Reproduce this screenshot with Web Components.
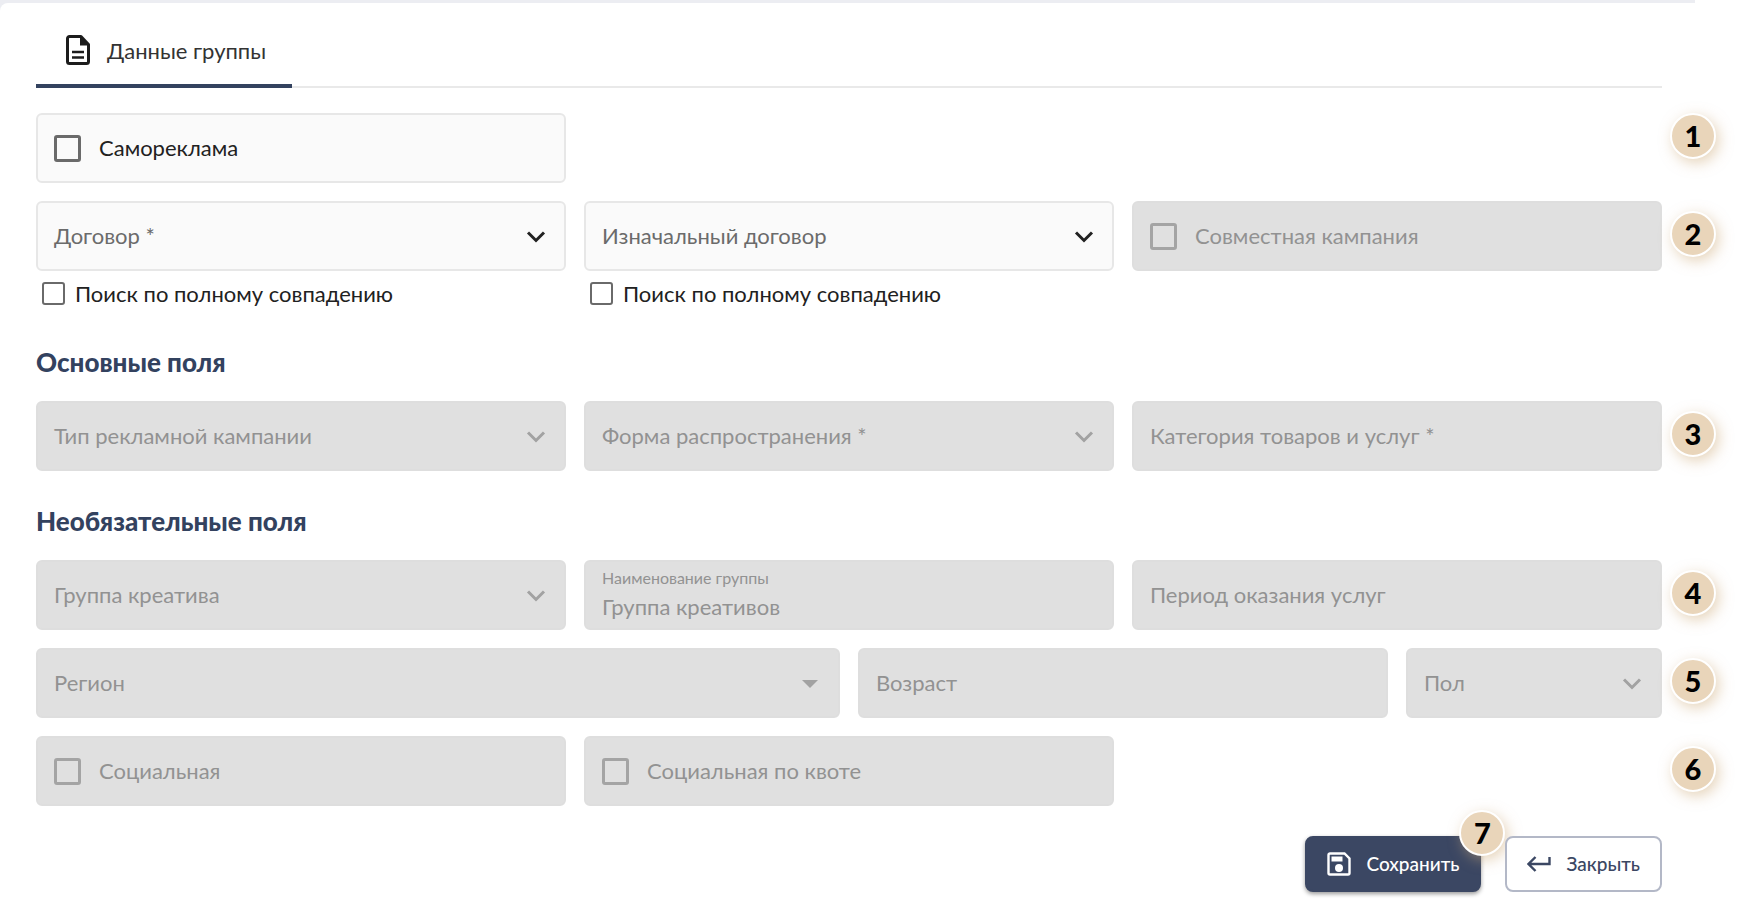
<!DOCTYPE html>
<html lang="ru">
<head>
<meta charset="utf-8">
<meta name="viewport" content="width=device-width, initial-scale=1">
<title>Данные группы</title>
<style>
  body {
    margin: 0;
    background: #fff;
    color: #212121;
    font-family: Lato, "Noto Sans", sans-serif;
    font-size: 22px;
    line-height: 26px;
  }
  .w2 { grid-column: span 2; }
  .w4 { grid-column: span 4; }
  .w6 { grid-column: span 6; }
</style>
</head>
<body>

<form-panel>
  <panel-tab slot="tabs">Данные группы</panel-tab>

  <form-row>
    <check-box class="w4" boxed label="Самореклама"></check-box>
    <step-pin slot="pin" top>1</step-pin>
  </form-row>

  <form-row>
    <select-field class="w4" label="Договор *"></select-field>
    <select-field class="w4" label="Изначальный договор"></select-field>
    <check-box class="w4" boxed disabled label="Совместная кампания"></check-box>
    <step-pin slot="pin">2</step-pin>
  </form-row>

  <form-row hints>
    <check-box class="w4" label="Поиск по полному совпадению"></check-box>
    <check-box class="w4" label="Поиск по полному совпадению"></check-box>
  </form-row>

  <section-title>Основные поля</section-title>

  <form-row>
    <select-field class="w4" disabled label="Тип рекламной кампании"></select-field>
    <select-field class="w4" disabled label="Форма распространения *"></select-field>
    <text-field class="w4" disabled label="Категория товаров и услуг *"></text-field>
    <step-pin slot="pin">3</step-pin>
  </form-row>

  <section-title>Необязательные поля</section-title>

  <form-row>
    <select-field class="w4" disabled label="Группа креатива"></select-field>
    <text-field class="w4" disabled label="Наименование группы" value="Группа креативов"></text-field>
    <text-field class="w4" disabled label="Период оказания услуг"></text-field>
    <step-pin slot="pin">4</step-pin>
  </form-row>

  <form-row>
    <select-field class="w6" disabled arrow="solid" label="Регион"></select-field>
    <text-field class="w4" disabled label="Возраст"></text-field>
    <select-field class="w2" disabled label="Пол"></select-field>
    <step-pin slot="pin">5</step-pin>
  </form-row>

  <form-row>
    <check-box class="w4" boxed disabled label="Социальная"></check-box>
    <check-box class="w4" boxed disabled label="Социальная по квоте"></check-box>
    <step-pin slot="pin">6</step-pin>
  </form-row>

  <action-button slot="actions" primary icon="save">
    Сохранить
    <step-pin slot="pin" corner>7</step-pin>
  </action-button>
  <action-button slot="actions" icon="back">Закрыть</action-button>
</form-panel>

<script>
// Общие стили рамки поля
const boxStyle = `
  .box {
    box-sizing: border-box;
    min-height: 70px;
    border: 2px solid #e7e7e7;
    border-radius: 6px;
    background: #fafafa;
  }
  :host([disabled]) .box {
    border-color: #dedede;
    background: #e0e0e0;
    color: #929292;
  }
`;

class FormPanel extends HTMLElement {
  constructor() {
    super();
    this.attachShadow({mode: 'open'});
    this.shadowRoot.innerHTML = `
      <style>
        :host {
          display: block;
          margin-right: 54px;
          padding-top: 3px;
          background: #ecedf2;
        }
        main {
          padding: 15px 33px 32px 36px;
          border-radius: 8px 0 0 0;
          background: #fff;
        }
        nav {
          display: flex;
          margin-bottom: 25px;
          box-shadow: inset 0 -2px #e9e9e9;
        }
        form {
          display: flex;
          flex-direction: column;
        }
        footer {
          display: flex;
          justify-content: flex-end;
          gap: 24px;
          margin-top: 12px;
        }
      </style>
      <main>
        <nav><slot name="tabs"></slot></nav>
        <form>
          <slot></slot>
          <footer><slot name="actions"></slot></footer>
        </form>
      </main>
    `;
  }
}

class PanelTab extends HTMLElement {
  constructor() {
    super();
    this.attachShadow({mode: 'open'});
    this.shadowRoot.innerHTML = `
      <style>
        :host { display: block; }
        button {
          display: flex;
          align-items: center;
          gap: 17px;
          height: 70px;
          padding: 0 26px 0 30px;
          border: 0;
          border-bottom: 4px solid #33425f;
          background: none;
          color: #333;
          font: inherit;
        }
        svg { flex: none; }
      </style>
      <button type="button">
        <svg width="24" height="32" viewBox="0 0 24 32" fill="none" stroke="#1c1c1c" aria-hidden="true">
          <path d="M3.5 1.5h11.500l7.500 8v17a2 2 0 0 1-2 2h-17a2 2 0 0 1-2-2v-23a2 2 0 0 1 2-2z" stroke-width="3" stroke-linejoin="round"/>
          <path d="M14 1.500v9h9z" fill="#1c1c1c" stroke="none"/>
          <path d="M6 17h12M6 22.500h12" stroke-width="2.600"/>
        </svg>
        <span><slot></slot></span>
      </button>
    `;
  }
}

class SectionTitle extends HTMLElement {
  constructor() {
    super();
    this.attachShadow({mode: 'open'});
    this.shadowRoot.innerHTML = `
      <style>
        :host { display: block; }
        h2 {
          margin: 17px 0 24px;
          color: #33425f;
          font-size: 26px;
          font-weight: 900;
          line-height: 30px;
        }
      </style>
      <h2><slot></slot></h2>
    `;
  }
}

// Строка на 12 колонок, номер шага стоит справа от неё
class FormRow extends HTMLElement {
  constructor() {
    super();
    this.attachShadow({mode: 'open'});
    this.shadowRoot.innerHTML = `
      <style>
        :host {
          display: block;
          position: relative;
          margin-bottom: 18px;
        }
        :host([hints]) { margin-top: -14px; }
        .grid {
          display: grid;
          grid-template-columns: repeat(12, minmax(0, 1fr));
          gap: 18px;
        }
      </style>
      <div class="grid"><slot></slot></div>
      <slot name="pin"></slot>
    `;
  }
}

class StepPin extends HTMLElement {
  constructor() {
    super();
    this.attachShadow({mode: 'open'});
    this.shadowRoot.innerHTML = `
      <style>
        :host {
          box-sizing: border-box;
          position: absolute;
          left: calc(100% + 8px);
          top: 10px;
          display: flex;
          align-items: center;
          justify-content: center;
          width: 46px;
          height: 46px;
          border: 2px solid #fff;
          border-radius: 50%;
          background: #e9d5ba;
          box-shadow: 3px 4px 14px rgba(205, 170, 120, .5);
          color: #000;
          font-size: 29px;
          font-weight: 900;
          line-height: 32px;
        }
        :host([top]) { top: 0; }
        :host([corner]) {
          left: auto;
          right: -24px;
          top: -26px;
        }
      </style>
      <slot></slot>
    `;
  }
}

class CheckBox extends HTMLElement {
  connectedCallback() {
    if (this.shadowRoot) return;
    this.attachShadow({mode: 'open'});
    const off = this.hasAttribute('disabled') ? 'disabled' : '';
    this.shadowRoot.innerHTML = `
      <style>
        ${boxStyle}
        :host { display: block; }
        label {
          display: flex;
          align-items: center;
          gap: 10px;
          min-height: 37px;
          padding-left: 6px;
        }
        label.box {
          gap: 18px;
          padding-left: 16px;
        }
        input {
          appearance: none;
          flex: none;
          box-sizing: border-box;
          width: 23px;
          height: 23px;
          margin: 0;
          border: 2px solid #6a6a6a;
          border-radius: 3px;
        }
        .box input {
          width: 27px;
          height: 27px;
          border-width: 3px;
        }
        input:disabled { border-color: #a4a4a4; }
        input:checked { background: #33425f; }
      </style>
      <label ${this.hasAttribute('boxed') ? 'class="box"' : ''}>
        <input type="checkbox" ${off}>
        <span>${this.getAttribute('label')}</span>
      </label>
    `;
  }
}

class SelectField extends HTMLElement {
  connectedCallback() {
    if (this.shadowRoot) return;
    this.attachShadow({mode: 'open'});
    const off = this.hasAttribute('disabled') ? 'disabled' : '';
    const arrow = this.getAttribute('arrow') === 'solid'
      ? '<path d="M2 7h16l-8 8z" fill="currentColor"/>'
      : '<path d="M2 6.500l8 8 8-8" fill="none" stroke="currentColor" stroke-width="3"/>';
    this.shadowRoot.innerHTML = `
      <style>
        ${boxStyle}
        :host { display: block; }
        .box {
          display: grid;
          grid-template-columns: 1fr auto;
          align-items: center;
        }
        label {
          grid-area: 1 / 1;
          padding-left: 16px;
          color: #6b6b6b;
          pointer-events: none;
          z-index: 1;
        }
        :host([disabled]) label { color: inherit; }
        select {
          grid-area: 1 / 1 / 2 / 3;
          align-self: stretch;
          appearance: none;
          width: 100%;
          padding: 0 16px;
          border: 0;
          background: none;
          color: inherit;
          font: inherit;
        }
        svg {
          grid-area: 1 / 2;
          margin-right: 18px;
          pointer-events: none;
        }
        :host([disabled]) svg { color: #a2a2a2; }
      </style>
      <div class="box">
        <select id="field" ${off}><option></option></select>
        <label for="field">${this.getAttribute('label')}</label>
        <svg width="20" height="20" viewBox="0 0 20 20" aria-hidden="true">${arrow}</svg>
      </div>
    `;
  }
}

class TextField extends HTMLElement {
  connectedCallback() {
    if (this.shadowRoot) return;
    this.attachShadow({mode: 'open'});
    const off = this.hasAttribute('disabled') ? 'disabled' : '';
    const value = this.getAttribute('value') || '';
    this.shadowRoot.innerHTML = `
      <style>
        ${boxStyle}
        :host { display: block; }
        .box {
          display: grid;
          align-items: center;
        }
        label, input { grid-area: 1 / 1; }
        label {
          padding-left: 16px;
          pointer-events: none;
        }
        input {
          box-sizing: border-box;
          align-self: stretch;
          width: 100%;
          min-width: 0;
          padding: 0 16px;
          border: 0;
          background: none;
          color: inherit;
          font: inherit;
        }
        /* заполненное поле: подпись уходит наверх */
        .filled label {
          align-self: start;
          padding-top: 6px;
          font-size: 16px;
          line-height: 20px;
        }
        .filled input { padding-top: 24px; }
      </style>
      <div class="box ${value ? 'filled' : ''}">
        <input id="field" type="text" value="${value}" ${off}>
        <label for="field">${this.getAttribute('label')}</label>
      </div>
    `;
  }
}

const icons = {
  save: `
    <svg width="24" height="24" viewBox="0 0 24 24" fill="none" stroke="currentColor" aria-hidden="true">
      <path d="M3 1.500h14.500l5 5V21a1.500 1.500 0 0 1-1.500 1.500H3A1.500 1.500 0 0 1 1.500 21V3A1.500 1.500 0 0 1 3 1.500z" stroke-width="2.400"/>
      <path d="M4.500 4.500h11v5h-11z" fill="currentColor" stroke="none"/>
      <circle cx="12" cy="16" r="4" fill="currentColor" stroke="none"/>
    </svg>`,
  back: `
    <svg width="24" height="24" viewBox="0 0 24 24" fill="none" stroke="currentColor" stroke-width="2.400" aria-hidden="true">
      <path d="M22.500 5v7H2M8.500 5l-7 7 7 7"/>
    </svg>`
};

class ActionButton extends HTMLElement {
  connectedCallback() {
    if (this.shadowRoot) return;
    this.attachShadow({mode: 'open'});
    this.shadowRoot.innerHTML = `
      <style>
        :host {
          display: block;
          position: relative;
        }
        button {
          display: flex;
          align-items: center;
          gap: 15px;
          height: 56px;
          padding: 0 20px;
          border: 2px solid #b3b8c7;
          border-radius: 8px;
          background: #fff;
          color: #3b4763;
          font: inherit;
          font-size: 19px;
          font-weight: 500;
        }
        :host([primary]) button {
          border-color: #3b4763;
          background: #3b4763;
          box-shadow: 0 2px 4px rgba(0, 0, 0, .4);
          color: #fff;
        }
        svg { flex: none; }
      </style>
      <button type="button">
        ${icons[this.getAttribute('icon')]}
        <span><slot></slot></span>
      </button>
      <slot name="pin"></slot>
    `;
  }
}

customElements.define('form-panel', FormPanel);
customElements.define('panel-tab', PanelTab);
customElements.define('section-title', SectionTitle);
customElements.define('form-row', FormRow);
customElements.define('step-pin', StepPin);
customElements.define('check-box', CheckBox);
customElements.define('select-field', SelectField);
customElements.define('text-field', TextField);
customElements.define('action-button', ActionButton);
</script>
</body>
</html>
